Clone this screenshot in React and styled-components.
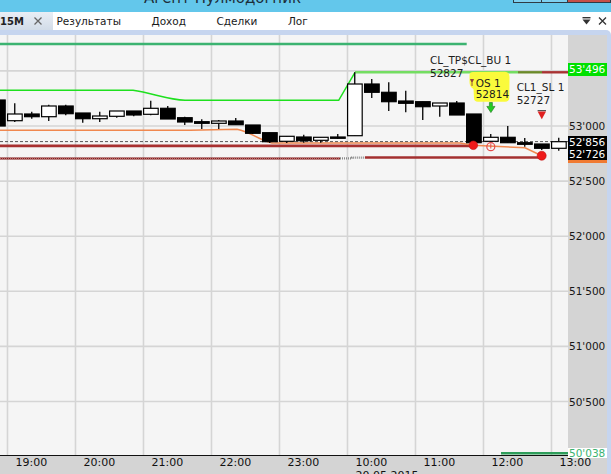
import React from "react";
import styled, { createGlobalStyle } from "styled-components";

const FONT = `"DejaVu Sans", Verdana, sans-serif`;

const GlobalStyle = createGlobalStyle`
  html, body {
    margin: 0;
    padding: 0;
    background: #fff;
    overflow: hidden;
  }
  body {
    font-family: ${FONT};
  }
`;

// price -> y on the page
const priceY = (p) => 126 + (53000 - p) * 0.1102;

// [slot, kind, bodyTop, bodyBottom, high, low]
const candles = [
  [-1, "b", 100, 126, 98, 127],
  [0, "w", 114, 120.7, 103.3, 122],
  [1, "b", 114, 116.7, 111.7, 118.7],
  [2, "w", 106, 116.7, 104.7, 121],
  [3, "b", 106, 113.7, 104.7, 115.3],
  [4, "b", 113, 118.7, 113, 122.7],
  [5, "w", 116, 118.7, 111.7, 122],
  [6, "w", 111, 116.3, 111, 117.7],
  [7, "b", 111, 115, 111, 116.3],
  [8, "w", 108.3, 114.3, 100.7, 115.3],
  [9, "b", 108.3, 119, 106, 119],
  [10, "b", 117.7, 122, 116.7, 125],
  [11, "b", 121.7, 123.3, 119.3, 129],
  [12, "w", 121, 123.3, 120, 129],
  [13, "b", 121, 124.7, 118, 124.7],
  [14, "b", 125, 133.3, 125, 134],
  [15, "b", 132.7, 141.7, 132.7, 143],
  [16, "w", 136.3, 141.3, 136.3, 143],
  [17, "b", 137, 140.7, 134.7, 142.7],
  [18, "w", 137.3, 140.3, 137.3, 142.7],
  [19, "b", 137, 138.3, 134, 138.7],
  [20, "w", 84, 135.7, 72.3, 135.7],
  [21, "b", 84, 92.3, 79, 98],
  [22, "b", 92.3, 101.7, 82.3, 111],
  [23, "b", 101, 103.3, 90.7, 112.3],
  [24, "b", 101.7, 106.7, 101.7, 120],
  [25, "w", 103, 106, 103, 116.7],
  [26, "b", 103, 115, 101, 115],
  [27, "b", 114, 142.7, 114, 142.7],
  [28, "w", 137.3, 141.3, 134, 141.3],
  [29, "b", 137.3, 142.7, 126, 142.7],
  [30, "b", 142.7, 144.3, 138, 146.7],
  [31, "b", 144, 148.3, 144, 150],
  [32, "w", 141.7, 148.3, 137.7, 150.7],
];

const gridX = [0, 1, 2, 3, 4, 5, 6, 7, 8].map((i) => 7.5 + 68 * i);
const gridPrices = [53500, 53000, 52500, 52000, 51500, 51000, 50500];
const axisPrices = [53000, 52500, 52000, 51500, 51000, 50500];
const fmt = (p) => `${Math.floor(p / 1000)}'${String(p % 1000).padStart(3, "0")}`;

const hours = ["19:00", "20:00", "21:00", "22:00", "23:00", "10:00", "11:00", "12:00", "13:00"];

const Window = styled.div`
  width: 611px;
  height: 474px;
  display: flex;
  flex-direction: column;
  overflow: hidden;
  background: #fff;
`;

const TitleBar = styled.div`
  flex: 0 0 12px;
  display: flex;
  background: #63c7eb;
  overflow: hidden;
`;

const TitleText = styled.div`
  margin: -9px 0 0 144px;
  font-size: 15px;
  line-height: 15px;
  color: #1d2e3a;
  white-space: nowrap;
`;

const WinButtons = styled.div`
  margin-left: auto;
  display: flex;
  align-self: flex-start;
`;

const WinButton = styled.div`
  width: ${(p) => p.$w}px;
  height: 3px;
  box-sizing: border-box;
  border: 1px solid #2f3b44;
  border-top: none;
  margin-left: -1px;
  background: ${(p) => (p.$close ? "#c65048" : "#7fd0ef")};
`;

const TabStrip = styled.div`
  flex: 0 0 18px;
  display: flex;
  align-items: stretch;
  background: #fff;
  font-size: 10.5px;
  color: #1a1a1a;
`;

const ActiveTab = styled.div`
  width: 53px;
  display: flex;
  align-items: center;
  gap: 9px;
  background: linear-gradient(#e9eef5, #d2dce8);
  font-weight: bold;
  font-size: 10px;
  color: #222;
`;

const Tab = styled.div`
  display: flex;
  align-items: center;
  padding: 0 27px 0 3.5px;
  white-space: nowrap;
`;

const TabTools = styled.div`
  margin-left: auto;
  display: flex;
  align-items: center;
  gap: 7px;
  padding-right: 4px;
`;

const Frame = styled.div`
  flex: 1;
  min-height: 0;
  display: flex;
  flex-direction: column;
  border-top: 5px solid #c6d5ef;
  border-right: 4px solid #c6d5ef;
  border-top-right-radius: 5px;
`;

const ChartRow = styled.div`
  flex: 0 0 420px;
  display: flex;
`;

const Plot = styled.div`
  width: 568px;
  background: #f5f5f5;
  svg {
    display: block;
  }
`;

const PriceAxis = styled.div`
  width: 39px;
  position: relative;
  z-index: 1;
  background: #d4d4d4;
`;

const AxisLabel = styled.div`
  position: absolute;
  left: 0;
  right: 0;
  padding-left: 1px;
  font-size: 10.5px;
  height: ${(p) => p.$h || 12}px;
  line-height: ${(p) => p.$h || 12}px;
  color: ${(p) => p.$fg || "#161616"};
  background: ${(p) => p.$bg || "transparent"};
  border-bottom: ${(p) => (p.$under ? `3px solid ${p.$under}` : "none")};
  white-space: nowrap;
`;

const TimeAxis = styled.div`
  flex: 1;
  display: flex;
  background: #d4d4d4;
  border-top: 1.5px solid #111;
  overflow: hidden;
`;

const TimeCell = styled.div`
  flex: 0 0 68px;
  width: 68px;
  min-width: 0;
  box-sizing: border-box;
  padding-left: 15.6px;
  font-size: 11px;
  line-height: 13px;
  color: #111;
  white-space: nowrap;
`;

const Note = styled.text`
  font-family: ${FONT};
  font-size: 10.5px;
  fill: #1c1c1c;
`;

const CloseIcon = ({ color = "#333", w = 9 }) => (
  <svg width={w} height="8" viewBox="0 0 9 8">
    <path d="M1 0.5 L8 7.5 M8 0.5 L1 7.5" stroke={color} strokeWidth="1.3" fill="none" />
  </svg>
);

const DropIcon = () => (
  <svg width="9" height="8" viewBox="0 0 9 8">
    <rect x="0.5" y="0" width="8" height="1.4" fill="#333" />
    <path d="M0.5 2.6 H8.5 L4.5 7.6 Z" fill="#333" />
  </svg>
);

const Candle = ({ k, kind, top, bottom, high, low }) => {
  const x = 7 + 17 * k;
  const cx = x + 7.75;
  return (
    <g>
      <line x1={cx} x2={cx} y1={high} y2={low} stroke="#000" strokeWidth="1.3" />
      <rect
        x={x + 0.6}
        y={top}
        width={14.6}
        height={Math.max(bottom - top, 1.2)}
        fill={kind === "b" ? "#000" : "#fff"}
        stroke="#000"
        strokeWidth="1.2"
      />
    </g>
  );
};

const Chart = () => (
  <svg width="568" height="420" viewBox="0 35 568 420">
    {gridX.map((x) => (
      <line key={x} x1={x} x2={x} y1={35} y2={455} stroke="#d5d5d5" strokeWidth="1.6" />
    ))}
    {gridPrices.map((p) => (
      <line key={p} x1={0} x2={568} y1={priceY(p)} y2={priceY(p)} stroke="#d5d5d5" strokeWidth="1.6" />
    ))}

    <line x1="0" x2="466.7" y1="44" y2="44" stroke="#3cb371" strokeWidth="2.4" />
    <line x1="501" x2="568" y1="453.3" y2="453.3" stroke="#2e9d5a" strokeWidth="2.4" />

    <path d="M0 90.3 H133 C152 93 168 99.5 185 100.3 H338.7 L355 72.3" fill="none" stroke="#1ee01e" strokeWidth="1.5" />
    <path d="M355 72.3 H518" stroke="#74dd62" strokeWidth="2.4" />
    <path d="M518 72.3 H542" stroke="#6b8a2a" strokeWidth="2.4" />
    <path d="M542 72.3 H568" stroke="#a83232" strokeWidth="2.4" />

    <line x1="0" x2="473" y1="145.9" y2="145.9" stroke="#a83030" strokeWidth="2.6" />
    <path
      d="M0 130.3 H190 L237 129.3 C250 132 258 139 268 141.7 L272 143 H460 L473 145.3 L525 147.7 L541.7 155.7"
      fill="none"
      stroke="#f0884f"
      strokeWidth="1.5"
    />
    <line x1="0" x2="568" y1="141.6" y2="141.6" stroke="#555" strokeWidth="1" strokeDasharray="3 2" />

    <line x1="0" x2="340" y1="158.5" y2="158.5" stroke="#7a2222" strokeWidth="2.2" />
    <line x1="0" x2="340" y1="158.5" y2="158.5" stroke="#c46a6a" strokeWidth="2.2" strokeDasharray="1 1" />
    <path d="M340 158.4 H352 V157.6 H365" fill="none" stroke="#8a8a8a" strokeWidth="2.2" strokeDasharray="1 1" />
    <line x1="365" x2="541" y1="157.5" y2="157.5" stroke="#a33030" strokeWidth="2.4" />

    {candles.map(([k, kind, top, bottom, high, low]) => (
      <Candle key={k} k={k} kind={kind} top={top} bottom={bottom} high={high} low={low} />
    ))}

    <circle cx="473.3" cy="145.3" r="4.3" fill="#ee1b1b" stroke="#c01010" strokeWidth="0.6" />
    <circle cx="541.7" cy="155.7" r="4.5" fill="#ee1b1b" stroke="#c01010" strokeWidth="0.6" />
    <circle cx="490.8" cy="146.7" r="4" fill="none" stroke="#e44a4a" strokeWidth="1.2" />
    <line x1="490.8" x2="490.8" y1="143.5" y2="148.5" stroke="#e44a4a" strokeWidth="1" />

    <path d="M489.4 102.5 H492.4 V106.4 H495 L490.9 112.6 L486.8 106.4 H489.4 Z" fill="#22cc22" stroke="#207020" strokeWidth="0.6" />
    <line x1="537.6" x2="546" y1="110.6" y2="110.6" stroke="#555" strokeWidth="1.2" />
    <path d="M537.6 111.4 H546 L541.8 119.2 Z" fill="#e02020" />

    <path
      d="M469.5 75 Q469.5 72 473 72 L505 71.7 Q509.5 72 509.5 77 L509.3 98 Q509 101.8 505 101.8 L478 101.8 Q474 101.8 474 98 L473.5 89 Q469.5 87 469.5 82 Z"
      fill="#fafa3c"
    />
    <path d="M470.5 79.5 H473.5 L472 82 Z M472 82 V86" fill="#8b3a3a" stroke="#8b3a3a" strokeWidth="0.9" />

    <Note x="430" y="64.3">CL_TP$CL_BU 1</Note>
    <Note x="430" y="76.7">52827</Note>
    <Note x="475.7" y="86.7">OS 1</Note>
    <Note x="475.7" y="98.3">52814</Note>
    <Note x="516.7" y="90.7">CL1_SL 1</Note>
    <Note x="516.7" y="104">52727</Note>
  </svg>
);

const AXIS_TOP = 35;

export default function App() {
  return (
    <>
      <GlobalStyle />
      <Window>
        <TitleBar>
          <TitleText>Агент Нулмодогник</TitleText>
          <WinButtons>
            <WinButton $w={29} />
            <WinButton $w={27} />
            <WinButton $w={44} $close />
          </WinButtons>
        </TitleBar>

        <TabStrip>
          <ActiveTab>
            <span>15M</span>
            <CloseIcon color="#666" w={10} />
          </ActiveTab>
          <Tab>Результаты</Tab>
          <Tab>Доход</Tab>
          <Tab>Сделки</Tab>
          <Tab>Лог</Tab>
          <TabTools>
            <DropIcon />
            <CloseIcon />
          </TabTools>
        </TabStrip>

        <Frame>
          <ChartRow>
            <Plot>
              <Chart />
            </Plot>
            <PriceAxis>
              {axisPrices.map((p) => (
                <AxisLabel key={p} style={{ top: priceY(p) - AXIS_TOP - 6 }}>
                  {fmt(p)}
                </AxisLabel>
              ))}
              <AxisLabel style={{ top: 63 - AXIS_TOP }} $h={13} $bg="#00e000" $fg="#fff">
                53'496
              </AxisLabel>
              <AxisLabel style={{ top: 136 - AXIS_TOP }} $h={13} $bg="#000" $fg="#fff">
                52'856
              </AxisLabel>
              <AxisLabel style={{ top: 149 - AXIS_TOP }} $h={11} $bg="#000" $fg="#fff" $under="#f07a32">
                52'726
              </AxisLabel>
              <AxisLabel style={{ top: 447.5 - AXIS_TOP }} $h={10} $bg="#fff" $fg="#3cb371">
                50'038
              </AxisLabel>
            </PriceAxis>
          </ChartRow>
          <TimeAxis>
            {hours.map((h) => (
              <TimeCell key={h}>
                {h}
                {h === "10:00" && <div>20.05.2015</div>}
              </TimeCell>
            ))}
          </TimeAxis>
        </Frame>
      </Window>
    </>
  );
}
